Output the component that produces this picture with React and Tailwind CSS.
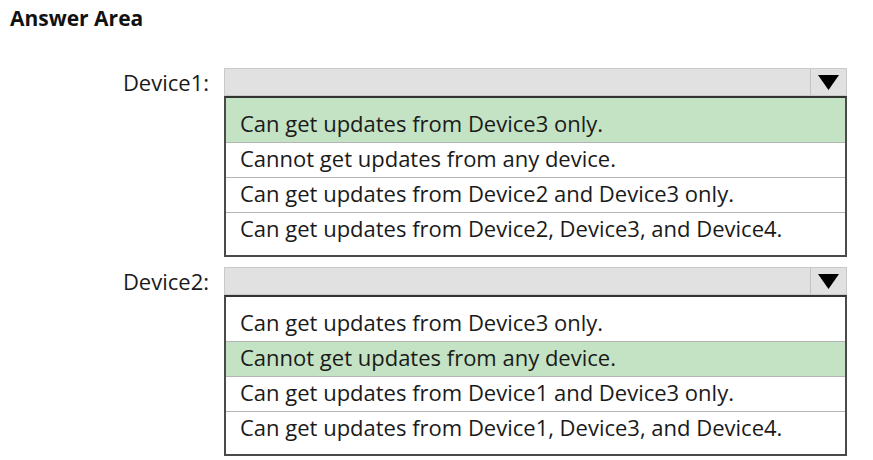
import React from 'react';

const groups = [
    {
        label: 'Device1:',
        selected: 0,
        options: [
            'Can get updates from Device3 only.',
            'Cannot get updates from any device.',
            'Can get updates from Device2 and Device3 only.',
            'Can get updates from Device2, Device3, and Device4.',
        ],
    },
    {
        label: 'Device2:',
        selected: 1,
        options: [
            'Can get updates from Device3 only.',
            'Cannot get updates from any device.',
            'Can get updates from Device1 and Device3 only.',
            'Can get updates from Device1, Device3, and Device4.',
        ],
    },
];

const Arrow = () => (
    <svg width="21" height="15" viewBox="0 0 21 15">
        <polygon points="0,0 21,0 10.5,15" fill="#000" />
    </svg>
);

const DropdownGroup = ({ label, selected, options }) => (
    <div className="flex">
        <div className="w-[209px] h-[28px] flex items-center justify-end text-[22px] text-[#1a1a1a]">
            {label}
        </div>
        <div className="ml-[15px] w-[623px]">
            {/* closed select */}
            <div className="h-[28px] flex bg-[#e1e1e1] border border-[#c9c9c9]">
                <div className="flex-1" />
                <div className="w-[36px] flex items-center justify-center border-l border-[#c2c2c2]">
                    <Arrow />
                </div>
            </div>
            {/* open list */}
            <div className="h-[161px] border-2 border-[#4a4a4a] border-t-[#333] flex flex-col">
                {options.map((opt, i) => {
                    const first = i === 0;
                    const last = i === options.length - 1;
                    const active = i === selected;
                    return (
                        <div
                            key={i}
                            className={
                                (first ? 'h-[44px] pt-[10px] ' : 'border-t border-[#b4b4b4] ') +
                                (last ? 'h-[43px] pb-[9px] ' : '') +
                                (!first && !last ? 'h-[35px] ' : '') +
                                (active ? 'bg-[#c4e2c4] ' : 'bg-white ')
                            }
                        >
                            <div className="h-full flex items-center pl-[14px] pb-[4px] text-[22px] text-[#1a1a1a] leading-none">
                                {opt}
                            </div>
                        </div>
                    );
                })}
            </div>
        </div>
    </div>
);

export default function App() {
    return (
        <div
            className="w-[873px] h-[460px] bg-white overflow-hidden"
            style={{ fontFamily: '"Open Sans", "Noto Sans", sans-serif' }}
        >
            <div className="h-[68px] pl-[10px] pt-[4px]">
                <h1 className="text-[21px] font-bold text-[#111] leading-[28px]">Answer Area</h1>
            </div>
            <div className="flex flex-col gap-[10px]">
                {groups.map((g) => (
                    <DropdownGroup key={g.label} {...g} />
                ))}
            </div>
        </div>
    );
}
